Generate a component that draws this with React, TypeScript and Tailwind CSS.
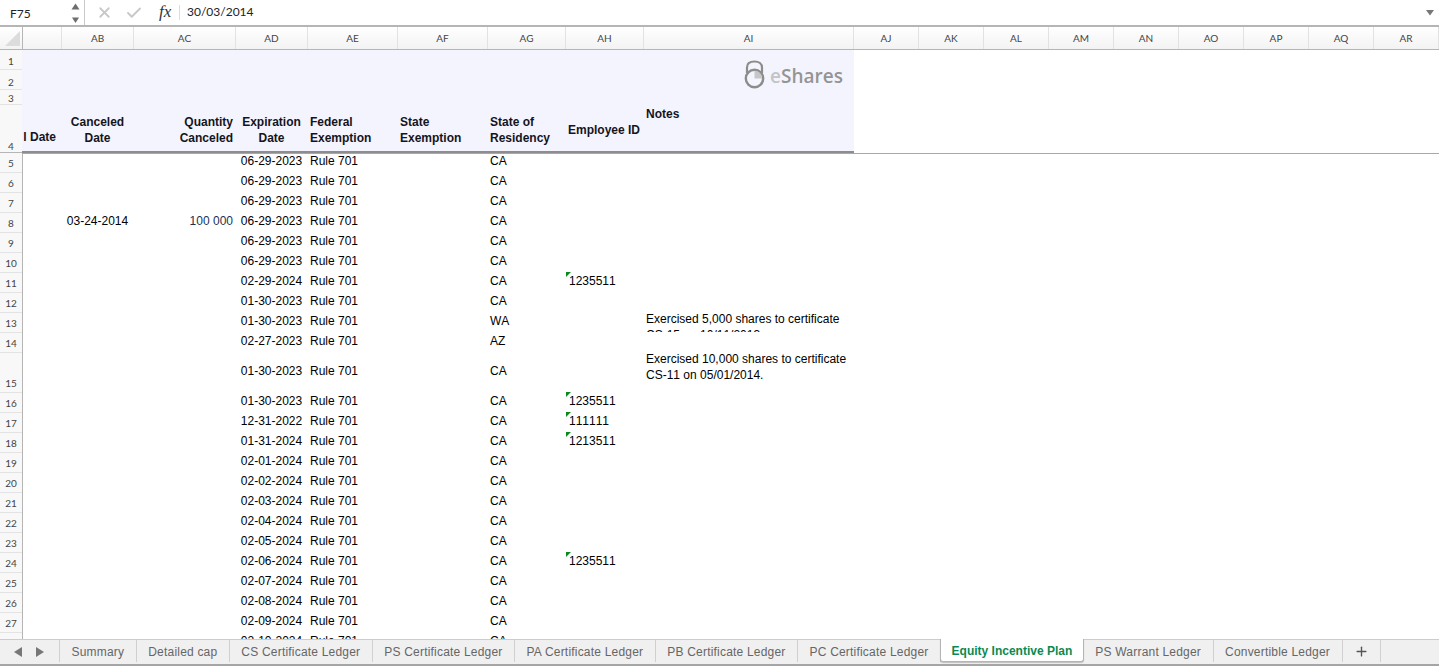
import { Check, Plus, X } from "lucide-react";

const columnLabels = ["", "AB", "AC", "AD", "AE", "AF", "AG", "AH", "AI", "AJ", "AK", "AL", "AM", "AN", "AO", "AP", "AQ", "AR"];
const sheetTabs = ["Summary", "Detailed cap", "CS Certificate Ledger", "PS Certificate Ledger", "PA Certificate Ledger", "PB Certificate Ledger", "PC Certificate Ledger", "Equity Incentive Plan", "PS Warrant Ledger", "Convertible Ledger"];

type Row = {
  n: number;
  date: string;
  state?: string;
  canceled?: string;
  quantity?: string;
  employee?: string;
};

const rows: Row[] = [
  { n: 5, date: "06-29-2023" },
  { n: 6, date: "06-29-2023" },
  { n: 7, date: "06-29-2023" },
  { n: 8, date: "06-29-2023", canceled: "03-24-2014", quantity: "100 000" },
  { n: 9, date: "06-29-2023" },
  { n: 10, date: "06-29-2023" },
  { n: 11, date: "02-29-2024", employee: "1235511" },
  { n: 12, date: "01-30-2023" },
  { n: 13, date: "01-30-2023", state: "WA" },
  { n: 14, date: "02-27-2023", state: "AZ" },
  { n: 15, date: "01-30-2023" },
  { n: 16, date: "01-30-2023", employee: "1235511" },
  { n: 17, date: "12-31-2022", employee: "111111" },
  { n: 18, date: "01-31-2024", employee: "1213511" },
  { n: 19, date: "02-01-2024" },
  { n: 20, date: "02-02-2024" },
  { n: 21, date: "02-03-2024" },
  { n: 22, date: "02-04-2024" },
  { n: 23, date: "02-05-2024" },
  { n: 24, date: "02-06-2024", employee: "1235511" },
  { n: 25, date: "02-07-2024" },
  { n: 26, date: "02-08-2024" },
  { n: 27, date: "02-09-2024" },
  { n: 28, date: "02-10-2024" },
];

function RowNumber({ label, className }: { label: number; className: string }) {
  return (
    <div className={`flex shrink-0 items-center justify-center border-b border-[#e3e3e3] text-[10px] leading-[12px] text-[#444] ${className}`}>
      {label}
    </div>
  );
}

function Logo() {
  return (
    <div className="flex items-start gap-[5px] pr-[11px] pt-[10px]">
      <svg width="21" height="29" viewBox="0 0 21 29" fill="none">
        <path d="M3 13V7.5C3 3.5 6 1.5 10.5 1.5S18 3.5 18 7.5V13" stroke="#8c8c8c" strokeWidth="2.2" />
        <circle cx="10.5" cy="18.5" r="8.7" stroke="#8c8c8c" strokeWidth="2.4" fill="#f4f4fe" />
        <path d="M10.5 18.5V10.8A7.7 7.7 0 0 1 18.2 18.5Z" fill="#c6c6c8" />
      </svg>
      <span className="mt-[4px] text-[19px] font-semibold leading-[24px] text-[#949494] [font-family:'Open_Sans',sans-serif]">
        <span className="text-[#c4c4c4]">e</span>Shares
      </span>
    </div>
  );
}

function SheetRow({ row }: { row: Row }) {
  const tall = row.n === 15;
  const textTop = tall ? "pt-[10px]" : "pt-0";
  return (
    <div className={`grid shrink-0 grid-cols-[39px_72px_102px_72px_90px_90px_78px_78px_210px] text-[12px] leading-[14px] text-black [font-kerning:none] ${tall ? "h-[40px]" : "h-[20px]"}`}>
      <div />
      <div className={`overflow-hidden pl-[1px] text-center ${textTop}`}>{row.canceled}</div>
      <div className={`overflow-hidden pr-[2px] text-right text-[#1a3355] ${textTop}`}>{row.quantity}</div>
      <div className={`overflow-hidden pl-[1px] text-center ${textTop}`}>{row.date}</div>
      <div className={`overflow-hidden pl-[3px] ${textTop}`}>Rule 701</div>
      <div />
      <div className={`overflow-hidden pl-[3px] ${textTop}`}>{row.state ?? "CA"}</div>
      <div className={`relative pl-[4px] ${textTop}`}>
        {row.employee && (
          <>
            <span className="absolute -top-[2px] left-[1px] h-0 w-0 border-r-[5px] border-t-[5px] border-r-transparent border-t-[#0b8a1c]" />
            {row.employee}
          </>
        )}
      </div>
      <div className="pl-[3px] leading-[16px]">
        {row.n === 13 && (
          <div className="-mt-[3px] h-[21px] overflow-hidden">
            Exercised 5,000 shares to certificate
            <br />
            CS-15 on 10/11/2013.
          </div>
        )}
        {tall && (
          <div className="-mt-[3px]">
            Exercised 10,000 shares to certificate
            <br />
            CS-11 on 05/01/2014.
          </div>
        )}
      </div>
    </div>
  );
}

export default function App() {
  return (
    <div className="flex h-[666px] w-[1439px] flex-col overflow-hidden bg-white [font-family:'Liberation_Sans',Arial,sans-serif]">
      {/* Formula bar */}
      <div className="flex h-[27px] shrink-0 items-start border-b-[2px] border-[#b5b5b5] [font-family:Lato,sans-serif]">
        <div className="flex h-[25px] w-[85px] shrink-0 items-center justify-between border-r border-[#c9c9c9] pl-[10px] pr-[4px] pt-[3px]">
          <span className="text-[12px] text-[#222]">F75</span>
          <svg width="9" height="20" viewBox="0 0 9 20" className="mb-[3px]">
            <path d="M4.5 0.5L8.5 6.5H0.5Z" fill="#6e6e6e" />
            <path d="M4.5 20L1 14.5H8Z" fill="#6e6e6e" />
          </svg>
        </div>
        <X size={17} strokeWidth={2.5} className="ml-[11px] mt-[4px] shrink-0 text-[#c8c8c8]" />
        <Check size={18} strokeWidth={2.5} className="ml-[12px] mt-[4px] shrink-0 text-[#c8c8c8]" />
        <span className="ml-[16px] mt-[1px] w-[20px] shrink-0 text-[17px] italic leading-[22px] text-[#333] [font-family:'Liberation_Serif',serif]">fx</span>
        <div className="mt-[5px] h-[15px] w-px shrink-0 bg-[#dcdcdc]" />
        <span className="ml-[7px] mt-[4px] text-[12px] leading-[16px] text-[#222]">30/03/2014</span>
        <svg width="8" height="6" viewBox="0 0 8 6" className="ml-auto mr-[5px] mt-[10px] shrink-0">
          <path d="M0 0H8L4 5.5Z" fill="#777" />
        </svg>
      </div>

      {/* Column header */}
      <div className="grid h-[23px] shrink-0 grid-cols-[23px_39px_72px_102px_72px_90px_90px_78px_78px_210px_65px_65px_65px_65px_65px_65px_65px_65px_65px_1fr] border-b border-[#b5b5b5] bg-gradient-to-b from-white to-[#f3f3f3] text-[10px] text-[#444] [font-family:Lato,sans-serif]">
        <div className="flex items-end justify-end border-r border-[#b5b5b5] pb-[3px] pr-[2px]">
          <svg width="15" height="15" viewBox="0 0 15 15">
            <path d="M15 0V15H0Z" fill="#dcdcdc" />
          </svg>
        </div>
        {columnLabels.map((label, index) => (
          <div key={index} className="flex items-center justify-center border-r border-[#e2e2e2] pt-[1px]">
            {label}
          </div>
        ))}
      </div>

      {/* Sheet */}
      <div className="flex min-h-0 flex-1 overflow-hidden">
        <div className="flex w-[23px] shrink-0 flex-col border-r border-[#b5b5b5] bg-[#f8f8f8] [font-family:Lato,sans-serif]">
          <RowNumber label={1} className="h-[20px] pt-[2px]" />
          <RowNumber label={2} className="h-[20px] pt-[5px]" />
          <RowNumber label={3} className="h-[15px] pt-[1px]" />
          <div className="flex h-[48px] shrink-0 items-end justify-center border-b border-[#b5b5b5] text-[10px] leading-[12px] text-[#444]">4</div>
          {rows.map((row) => (
            <RowNumber key={row.n} label={row.n} className={row.n === 15 ? "h-[40px] items-end pb-[3px]" : "h-[20px]"} />
          ))}
        </div>
        <div className="flex min-w-0 flex-1 -ml-px flex-col">
          <div className="h-[104px] shrink-0 border-b border-[#a8a8a8]">
            <div className="flex h-[103px] w-[832px] flex-col border-b-[2px] border-[#8d8d8d] bg-[#f4f4fe]">
              <div className="flex h-[55px] shrink-0 justify-end">
                <Logo />
              </div>
              <div className="grid flex-1 grid-cols-[39px_72px_102px_72px_90px_90px_78px_78px_210px] text-[12px] font-bold leading-[16px] text-[#14141c]">
                <div className="flex items-end justify-end pb-[6px] pr-[5px]">l Date</div>
                <div className="pl-[1px] pt-[9px] text-center">Canceled<br />Date</div>
                <div className="pr-[2px] pt-[9px] text-right">Quantity<br />Canceled</div>
                <div className="pl-[1px] pt-[9px] text-center">Expiration<br />Date</div>
                <div className="pl-[3px] pt-[9px]">Federal<br />Exemption</div>
                <div className="pl-[3px] pt-[9px]">State<br />Exemption</div>
                <div className="pl-[3px] pt-[9px]">State of<br />Residency</div>
                <div className="pl-[3px] pt-[17px]">Employee ID</div>
                <div className="pl-[3px] pt-px">Notes</div>
              </div>
            </div>
          </div>
          <div className="flex min-h-0 flex-1 flex-col overflow-hidden">
            {rows.map((row) => (
              <SheetRow key={row.n} row={row} />
            ))}
          </div>
        </div>
      </div>

      {/* Sheet tabs */}
      <div className="flex h-[27px] shrink-0 items-start border-y border-b-[2px] border-t-[#cccccc] border-b-[#a5a5a5] bg-[#f0f0f0] text-[12px] tracking-[0.2px] text-[#666]">
        <div className="flex h-[22px] w-[60px] shrink-0 items-center gap-[14px] border-r border-[#d0d0d0] pl-[14px] pt-[1px]">
          <svg width="8" height="10" viewBox="0 0 8 10"><path d="M8 0V10L0 5Z" fill="#777" /></svg>
          <svg width="8" height="10" viewBox="0 0 8 10"><path d="M0 0V10L8 5Z" fill="#777" /></svg>
        </div>
        {sheetTabs.map((tab) =>
          tab === "Equity Incentive Plan" ? (
            <div key={tab} className="-ml-px -mt-px flex h-[23px] items-center rounded-b-[3px] border-x border-b border-[#b5b5b5] bg-white px-[10.6px] pt-[2px] font-bold tracking-normal text-[#0a8a52] shadow-[0_1px_1px_rgba(0,0,0,0.2)]">
              {tab}
            </div>
          ) : (
            <div key={tab} className="flex h-[22px] items-center border-r border-[#d0d0d0] px-[11.5px] pt-[1px]">
              {tab}
            </div>
          ),
        )}
        <div className="flex h-[22px] w-[38px] items-center justify-center border-r border-[#d0d0d0] pt-[1px]">
          <Plus size={15} strokeWidth={2.2} className="text-[#555]" />
        </div>
      </div>
    </div>
  );
}
